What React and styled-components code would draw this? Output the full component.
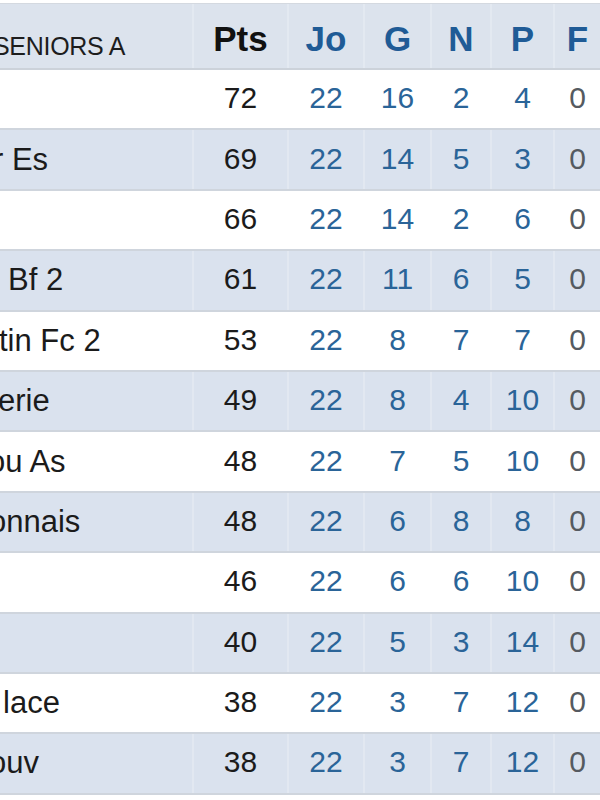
import React from 'react';
import styled, { createGlobalStyle } from 'styled-components';

const GlobalStyle = createGlobalStyle`
  html, body {
    margin: 0;
    padding: 0;
    background: #ffffff;
  }
  body {
    font-family: "Liberation Sans", Arial, sans-serif;
    width: 600px;
    height: 800px;
    overflow: hidden;
  }
`;

const COLS = '192px 95px 76px 67px 60px 63px 47px';

const rows = [
  { name: '', shift: 0, pts: 72, jo: 22, g: 16, n: 2, p: 4, f: 0 },
  { name: 'r Es', shift: -7, pts: 69, jo: 22, g: 14, n: 5, p: 3, f: 0 },
  { name: '', shift: 0, pts: 66, jo: 22, g: 14, n: 2, p: 6, f: 0 },
  { name: 'Bf 2', shift: 8, pts: 61, jo: 22, g: 11, n: 6, p: 5, f: 0 },
  { name: 'tin Fc 2', shift: -1, pts: 53, jo: 22, g: 8, n: 7, p: 7, f: 0 },
  { name: 'erie', shift: -2, pts: 49, jo: 22, g: 8, n: 4, p: 10, f: 0 },
  { name: 'ou As', shift: -12, pts: 48, jo: 22, g: 7, n: 5, p: 10, f: 0 },
  { name: 'onnais', shift: -11, pts: 48, jo: 22, g: 6, n: 8, p: 8, f: 0 },
  { name: '', shift: 0, pts: 46, jo: 22, g: 6, n: 6, p: 10, f: 0 },
  { name: '', shift: 0, pts: 40, jo: 22, g: 5, n: 3, p: 14, f: 0 },
  { name: 'lace', shift: 3, pts: 38, jo: 22, g: 3, n: 7, p: 12, f: 0 },
  { name: 'ouv', shift: -11, pts: 38, jo: 22, g: 3, n: 7, p: 12, f: 0 },
];

export default function App() {
  return (
    <>
      <GlobalStyle />
      <Standings>
        <HeadRow>
          <NameHead>SENIORS A</NameHead>
          <HeadCell $tone="dark">Pts</HeadCell>
          <HeadCell>Jo</HeadCell>
          <HeadCell>G</HeadCell>
          <HeadCell>N</HeadCell>
          <HeadCell>P</HeadCell>
          <HeadCell>F</HeadCell>
        </HeadRow>
        {rows.map((r, i) => (
          <Row key={i} $shaded={i % 2 === 1}>
            <NameCell>
              <TeamName $shift={r.shift}>{r.name}</TeamName>
            </NameCell>
            <Cell $tone="dark">{r.pts}</Cell>
            <Cell>{r.jo}</Cell>
            <Cell>{r.g}</Cell>
            <Cell>{r.n}</Cell>
            <Cell>{r.p}</Cell>
            <Cell $tone="grey">{r.f}</Cell>
          </Row>
        ))}
      </Standings>
    </>
  );
}

const Standings = styled.div`
  display: flex;
  flex-direction: column;
  padding-top: 3px;
`;

const HeadRow = styled.div`
  display: grid;
  grid-template-columns: ${COLS};
  box-sizing: border-box;
  height: 67px;
  background: #dce3ed;
  border-top: 1px solid #d4d9e0;
  border-bottom: 2px solid #ccd2da;
`;

const NameHead = styled.div`
  overflow: hidden;
  white-space: nowrap;
  padding-top: 30px;
  margin-left: -7px;
  font-size: 25px;
  line-height: 1;
  letter-spacing: -0.3px;
  color: #1d1d1d;
`;

const HeadCell = styled.div`
  display: flex;
  align-items: center;
  justify-content: center;
  padding-top: 5px;
  border-left: 2px solid rgba(255, 255, 255, 0.22);
  font-size: 35px;
  font-weight: 700;
  color: ${(p) => (p.$tone === 'dark' ? '#111111' : '#1f5b96')};
`;

const Row = styled.div`
  display: grid;
  grid-template-columns: ${COLS};
  box-sizing: border-box;
  height: 60.4px;
  background: ${(p) => (p.$shaded ? '#dae2ee' : '#ffffff')};
  border-bottom: 2px solid #cfd5dd;
`;

const NameCell = styled.div`
  display: flex;
  align-items: center;
  overflow: hidden;
  white-space: nowrap;
`;

const TeamName = styled.span`
  margin-left: ${(p) => p.$shift}px;
  font-size: 31px;
  color: #1b1b1b;
`;

const toneColor = {
  dark: '#1b1b1b',
  grey: '#555a60',
  blue: '#2a6498',
};

const Cell = styled.div`
  display: flex;
  align-items: center;
  justify-content: center;
  padding-bottom: 2px;
  border-left: 2px solid rgba(255, 255, 255, 0.22);
  font-size: 30px;
  color: ${(p) => toneColor[p.$tone || 'blue']};
`;
